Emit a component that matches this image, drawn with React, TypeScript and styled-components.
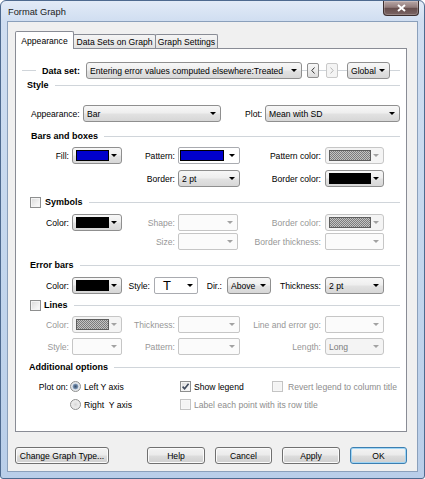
import React from "react";
import styled, { createGlobalStyle } from "styled-components";

const GlobalStyle = createGlobalStyle`
  html, body { margin: 0; padding: 0; }
  body {
    background: #ffffff;
    font-family: "Liberation Sans", Arial, sans-serif;
    font-size: 8.6px;
    color: #000;
  }
  * { box-sizing: border-box; }
`;

const CHECKER = "repeating-conic-gradient(#7c7c7c 0% 25%, #c4c4c4 0% 50%) 0 0 / 2px 2px";

/* ---------- window chrome ---------- */

const Window = styled.div`
  width: 425px;
  height: 479px;
  border: 1px solid #4e6a8f;
  border-radius: 6px 6px 3px 3px;
  background: linear-gradient(180deg, #e2ebf7 0px, #d0def1 20px, #c3d6ed 55%, #b9cee9 100%);
  padding: 0 6px 6px 6px;
  display: flex;
  flex-direction: column;
  overflow: hidden;
`;

const TitleBar = styled.div`
  height: 20px;
  display: flex;
  align-items: flex-start;
  justify-content: space-between;
  margin-right: -1px;
`;

const Title = styled.span`
  font-size: 9.3px;
  line-height: 22px;
  padding-left: 1px;
  color: #1b1b1b;
`;

const CloseButton = styled.div`
  width: 36px;
  height: 15px;
  border: 1px solid #3d2f2f;
  border-top: none;
  border-radius: 0 0 4px 4px;
  background: linear-gradient(180deg, #b9a8a7 0%, #917b7a 45%, #664e4d 52%, #7b6564 100%);
  box-shadow: inset 0 0 0 1px rgba(255, 255, 255, 0.22);
  display: flex;
  align-items: center;
  justify-content: center;
`;

const Client = styled.div`
  flex: 1;
  border: 1px solid #8ba0bb;
  background: #f0f0f0;
  padding: 9px 10px 7px 7px;
  display: flex;
  flex-direction: column;
`;

/* ---------- tabs ---------- */

const TabStrip = styled.div`
  height: 17px;
  display: flex;
  align-items: flex-end;
`;

const Tab = styled.div<{ $active?: boolean; $w: number }>`
  position: relative;
  z-index: ${(p) => (p.$active ? 2 : 1)};
  width: ${(p) => p.$w}px;
  height: ${(p) => (p.$active ? 18 : 14)}px;
  margin-bottom: ${(p) => (p.$active ? -1 : 0)}px;
  margin-left: ${(p) => (p.$active ? 0 : -1)}px;
  border: 1px solid #898c95;
  border-bottom: none;
  border-radius: 2px 2px 0 0;
  background: ${(p) => (p.$active ? "#ffffff" : "linear-gradient(180deg, #f5f5f5 0%, #ececec 50%, #e1e1e1 100%)")};
  display: flex;
  align-items: center;
  justify-content: center;
  padding-top: ${(p) => (p.$active ? 0 : 1)}px;
  white-space: nowrap;
`;

const Panel = styled.div`
  height: 384px;
  border: 1px solid #898c95;
  background: #ffffff;
  padding: 13px 6px 0 6px;
  display: flex;
  flex-direction: column;
`;

/* ---------- generic bits ---------- */

const Rule = styled.span<{ $w?: number }>`
  height: 1px;
  background: #d0d5da;
  ${(p) => (p.$w ? `width: ${p.$w}px; flex: none;` : "flex: 1;")}
`;

const Label = styled.span<{ $disabled?: boolean; $align?: "left" | "right"; $pr?: number }>`
  text-align: ${(p) => p.$align ?? "right"};
  padding-right: ${(p) => p.$pr ?? 3}px;
  white-space: nowrap;
  color: ${(p) => (p.$disabled ? "#979797" : "#000")};
`;

const FixedLabel = styled(Label)<{ $w: number; $ml?: number }>`
  width: ${(p) => p.$w}px;
  margin-left: ${(p) => p.$ml ?? 0}px;
  flex: none;
`;

const BoldLabel = styled.span<{ $w: number; $ml?: number }>`
  width: ${(p) => p.$w}px;
  margin-left: ${(p) => p.$ml ?? 0}px;
  flex: none;
  font-weight: bold;
  font-size: 9px;
  white-space: nowrap;
`;

const Header = styled.div<{ $mt: number; $indent: number }>`
  display: flex;
  align-items: center;
  height: 12px;
  margin-top: ${(p) => p.$mt}px;
  padding-left: ${(p) => p.$indent}px;
`;

const HeaderText = styled.span<{ $ml?: number }>`
  font-weight: bold;
  font-size: 9px;
  margin-left: ${(p) => p.$ml ?? 0}px;
  margin-right: 6px;
  white-space: nowrap;
`;

/* ---------- combo boxes ---------- */

type Kind = "button" | "field";

const ComboBox = styled.div<{ $w: number; $kind: Kind; $disabled?: boolean }>`
  width: ${(p) => p.$w}px;
  height: 17px;
  flex: none;
  border: 1px solid
    ${(p) =>
      p.$disabled
        ? "#c6c6c6"
        : p.$kind === "button"
        ? "#8f8f8f"
        : "#a9abb0"};
  border-radius: ${(p) => (p.$kind === "button" ? 3 : 2)}px;
  background: ${(p) =>
    p.$kind === "field"
      ? p.$disabled
        ? "#fbfbfb"
        : "#ffffff"
      : p.$disabled
      ? "#f4f4f4"
      : "linear-gradient(180deg, #f7f7f7 0%, #eeeeee 48%, #e2e2e2 52%, #d7d7d7 100%)"};
  color: ${(p) => (p.$disabled ? "#7d7d7d" : "#000")};
  display: flex;
  align-items: center;
  padding: 0 4px 0 ${(p) => (p.$kind === "field" ? 1 : 3)}px;
  gap: 2px;
  overflow: hidden;
`;

const ComboValue = styled.span`
  flex: 1;
  display: flex;
  align-items: center;
  white-space: nowrap;
  overflow: hidden;
`;

const Arrow = styled.span<{ $disabled?: boolean }>`
  flex: none;
  width: 0;
  height: 0;
  border-left: 3px solid transparent;
  border-right: 3px solid transparent;
  border-top: 3px solid ${(p) => (p.$disabled ? "#a2a2a2" : "#000")};
`;

const Swatch = styled.span<{ $fill: string; $w: number; $disabled?: boolean }>`
  width: ${(p) => p.$w}px;
  height: 11px;
  flex: none;
  border: 1px solid ${(p) => (p.$disabled ? "#5e5e5e" : "#000")};
  background: ${(p) => p.$fill};
`;

const TGlyph = styled.span`
  font-size: 13px;
  line-height: 13px;
  padding-left: 7px;
`;

const NavButton = styled.div<{ $disabled?: boolean }>`
  width: 12px;
  height: 15px;
  flex: none;
  border: 1px solid ${(p) => (p.$disabled ? "#c9c9c9" : "#8f8f8f")};
  border-radius: 2px;
  background: ${(p) =>
    p.$disabled ? "#f4f4f4" : "linear-gradient(180deg, #f7f7f7 0%, #ececec 50%, #dcdcdc 100%)"};
  display: flex;
  align-items: center;
  justify-content: center;
`;

function Dropdown({
  w,
  kind = "button",
  disabled,
  children,
}: {
  w: number;
  kind?: Kind;
  disabled?: boolean;
  children?: React.ReactNode;
}) {
  return (
    <ComboBox $w={w} $kind={kind} $disabled={disabled}>
      <ComboValue>{children}</ComboValue>
      <Arrow $disabled={disabled} />
    </ComboBox>
  );
}

/* ---------- checkbox / radio ---------- */

const Box = styled.span<{ $disabled?: boolean }>`
  width: 11px;
  height: 11px;
  flex: none;
  border: 1px solid ${(p) => (p.$disabled ? "#c4c4c4" : "#8e8f8f")};
  background: ${(p) =>
    p.$disabled ? "#f4f4f4" : "linear-gradient(135deg, #d9d9d9 0%, #f0f0f0 60%, #fdfdfd 100%)"};
  box-shadow: inset 0 0 0 1px ${(p) => (p.$disabled ? "#f7f7f7" : "#f4f4f4")};
  display: inline-flex;
  align-items: center;
  justify-content: center;
`;

function CheckBox({ checked, disabled }: { checked?: boolean; disabled?: boolean }) {
  return (
    <Box $disabled={disabled}>
      {checked && (
        <svg width="9" height="9" viewBox="0 0 9 9">
          <path d="M1.6 4.6 L3.6 6.8 L7.6 1.8" fill="none" stroke="#3f4a5c" strokeWidth="1.6" />
        </svg>
      )}
    </Box>
  );
}

const Radio = styled.span<{ $checked?: boolean }>`
  width: 11px;
  height: 11px;
  flex: none;
  border-radius: 50%;
  border: 1px solid #8e8f8f;
  background: ${(p) =>
    p.$checked
      ? "radial-gradient(circle, #3e4f66 0, #5c7796 1.6px, #8aa4c2 2.6px, #dfe3e8 3.2px, #f1f1f1 100%)"
      : "radial-gradient(circle, #d6d6d6 0, #e6e6e6 2px, #f4f4f4 100%)"};
`;

const Choice = styled.span<{ $gap: number; $disabled?: boolean }>`
  display: flex;
  align-items: center;
  gap: ${(p) => p.$gap}px;
  white-space: nowrap;
  color: ${(p) => (p.$disabled ? "#8d8d8d" : "#000")};
`;

/* ---------- rows ---------- */

const DataSetRow = styled.div`
  display: flex;
  align-items: center;
  height: 17px;
`;

const FlexRow = styled.div<{ $mt: number; $pl?: number }>`
  display: flex;
  align-items: center;
  height: 17px;
  margin-top: ${(p) => p.$mt}px;
  padding-left: ${(p) => p.$pl ?? 0}px;
`;

const TripleRow = styled.div<{ $mt: number }>`
  display: grid;
  grid-template-columns: 50px 50px 56px 62px 85px 59px;
  align-items: center;
  height: 17px;
  margin-top: ${(p) => p.$mt}px;
`;

const ErrorRow = styled.div<{ $mt: number }>`
  display: grid;
  grid-template-columns: 50px 50px 32px 44px 29px 44px 54px 59px;
  align-items: center;
  height: 17px;
  margin-top: ${(p) => p.$mt}px;
`;

const OptionsRow = styled.div<{ $mt: number }>`
  display: grid;
  grid-template-columns: 48px 110px 92px 1fr;
  align-items: center;
  height: 17px;
  margin-top: ${(p) => p.$mt}px;
`;

const Span2 = styled.div`
  grid-column: span 2;
`;

/* ---------- buttons ---------- */

const ButtonRow = styled.div`
  display: flex;
  align-items: center;
  margin-top: 15px;
  gap: 10px;
`;

const Spacer = styled.div`
  flex: 1;
`;

const Button = styled.div<{ $w: number; $default?: boolean }>`
  width: ${(p) => p.$w}px;
  height: 17px;
  border: 1px solid ${(p) => (p.$default ? "#3c7fb1" : "#707070")};
  border-radius: 3px;
  background: linear-gradient(180deg, #f3f3f3 0%, #ebebeb 48%, #dddddd 52%, #cfcfcf 100%);
  box-shadow: inset 0 0 0 1px ${(p) => (p.$default ? "#9fd5f5" : "#fbfbfb")};
  display: flex;
  align-items: center;
  justify-content: center;
  white-space: nowrap;
`;

/* ---------- app ---------- */

export default function App() {
  return (
    <>
      <GlobalStyle />
      <Window>
        <TitleBar>
          <Title>Format Graph</Title>
          <CloseButton>
            <svg width="9" height="8" viewBox="0 0 9 8">
              <path d="M1 1 L8 7 M8 1 L1 7" stroke="#ffffff" strokeWidth="2" />
            </svg>
          </CloseButton>
        </TitleBar>
        <Client>
          <TabStrip>
            <Tab $active $w={59}>Appearance</Tab>
            <Tab $w={83}>Data Sets on Graph</Tab>
            <Tab $w={63}>Graph Settings</Tab>
          </TabStrip>
          <Panel>
            <DataSetRow>
              <Rule $w={14} />
              <BoldLabel $w={44} $ml={6}>Data set:</BoldLabel>
              <Dropdown w={216}>Entering error values computed elsewhere:Treated</Dropdown>
              <Rule $w={5} />
              <NavButton>
                <svg width="4" height="7" viewBox="0 0 4 7">
                  <path d="M3.5 0.5 L0.8 3.5 L3.5 6.5" fill="none" stroke="#333" strokeWidth="1" />
                </svg>
              </NavButton>
              <Rule $w={7} />
              <NavButton $disabled>
                <svg width="4" height="7" viewBox="0 0 4 7">
                  <path d="M0.5 0.5 L3.2 3.5 L0.5 6.5" fill="none" stroke="#b5b5b5" strokeWidth="1" />
                </svg>
              </NavButton>
              <Rule $w={9} />
              <Dropdown w={43}>Global</Dropdown>
              <Rule />
            </DataSetRow>

            <Header $mt={0} $indent={5}>
              <HeaderText>Style</HeaderText>
              <Rule />
            </Header>
            <FlexRow $mt={14} $pl={9}>
              <FixedLabel $w={52} $align="left" $pr={0}>Appearance:</FixedLabel>
              <Dropdown w={138}>Bar</Dropdown>
              <FixedLabel $w={20} $ml={24} $align="left" $pr={0}>Plot:</FixedLabel>
              <Dropdown w={135}>Mean with SD</Dropdown>
            </FlexRow>

            <Header $mt={8} $indent={9}>
              <HeaderText>Bars and boxes</HeaderText>
              <Rule />
            </Header>
            <TripleRow $mt={5}>
              <Label>Fill:</Label>
              <Dropdown w={50}>
                <Swatch $w={33} $fill="#0000cc" />
              </Dropdown>
              <Label>Pattern:</Label>
              <Dropdown w={62} kind="field">
                <Swatch $w={44} $fill="#0000cc" />
              </Dropdown>
              <Label $pr={4}>Pattern color:</Label>
              <Dropdown w={59} disabled>
                <Swatch $w={42} $fill={CHECKER} $disabled />
              </Dropdown>
            </TripleRow>
            <TripleRow $mt={6}>
              <span />
              <span />
              <Label>Border:</Label>
              <Dropdown w={62}>2 pt</Dropdown>
              <Label $pr={4}>Border color:</Label>
              <Dropdown w={59}>
                <Swatch $w={42} $fill="#000000" />
              </Dropdown>
            </TripleRow>

            <Header $mt={9} $indent={8}>
              <CheckBox />
              <HeaderText $ml={4}>Symbols</HeaderText>
              <Rule />
            </Header>
            <TripleRow $mt={6}>
              <Label>Color:</Label>
              <Dropdown w={50}>
                <Swatch $w={33} $fill="#000000" />
              </Dropdown>
              <Label $disabled>Shape:</Label>
              <Dropdown w={60} kind="field" disabled />
              <Label $disabled $pr={4}>Border color:</Label>
              <Dropdown w={59} disabled>
                <Swatch $w={42} $fill={CHECKER} $disabled />
              </Dropdown>
            </TripleRow>
            <TripleRow $mt={2}>
              <span />
              <span />
              <Label $disabled>Size:</Label>
              <Dropdown w={60} kind="field" disabled />
              <Label $disabled $pr={4}>Border thickness:</Label>
              <Dropdown w={59} kind="field" disabled />
            </TripleRow>

            <Header $mt={9} $indent={8}>
              <HeaderText>Error bars</HeaderText>
              <Rule />
            </Header>
            <ErrorRow $mt={6}>
              <Label>Color:</Label>
              <Dropdown w={50}>
                <Swatch $w={33} $fill="#000000" />
              </Dropdown>
              <Label $pr={4}>Style:</Label>
              <Dropdown w={44} kind="field">
                <TGlyph>T</TGlyph>
              </Dropdown>
              <Label $pr={5}>Dir.:</Label>
              <Dropdown w={44}>Above</Dropdown>
              <Label $pr={4}>Thickness:</Label>
              <Dropdown w={59}>2 pt</Dropdown>
            </ErrorRow>

            <Header $mt={5} $indent={8}>
              <CheckBox />
              <HeaderText $ml={3}>Lines</HeaderText>
              <Rule />
            </Header>
            <TripleRow $mt={5}>
              <Label $disabled>Color:</Label>
              <Dropdown w={50} disabled>
                <Swatch $w={33} $fill={CHECKER} $disabled />
              </Dropdown>
              <Label $disabled>Thickness:</Label>
              <Dropdown w={62} kind="field" disabled />
              <Label $disabled $pr={4}>Line and error go:</Label>
              <Dropdown w={59} kind="field" disabled />
            </TripleRow>
            <TripleRow $mt={5}>
              <Label $disabled>Style:</Label>
              <Dropdown w={50} kind="field" disabled />
              <Label $disabled>Pattern:</Label>
              <Dropdown w={62} kind="field" disabled />
              <Label $disabled $pr={4}>Length:</Label>
              <Dropdown w={59} disabled>Long</Dropdown>
            </TripleRow>

            <Header $mt={6} $indent={7}>
              <HeaderText>Additional options</HeaderText>
              <Rule />
            </Header>
            <OptionsRow $mt={5}>
              <Label $pr={2}>Plot on:</Label>
              <Choice $gap={3}>
                <Radio $checked />
                Left Y axis
              </Choice>
              <Choice $gap={3}>
                <CheckBox checked />
                Show legend
              </Choice>
              <Choice $gap={5} $disabled>
                <CheckBox disabled />
                Revert legend to column title
              </Choice>
            </OptionsRow>
            <OptionsRow $mt={1}>
              <span />
              <Choice $gap={3}>
                <Radio />
                Right{"\u00a0"} Y axis
              </Choice>
              <Span2>
                <Choice $gap={3} $disabled>
                  <CheckBox disabled />
                  Label each point with its row title
                </Choice>
              </Span2>
            </OptionsRow>
          </Panel>
          <ButtonRow>
            <Button $w={94}>Change Graph Type...</Button>
            <Spacer />
            <Button $w={58}>Help</Button>
            <Button $w={57}>Cancel</Button>
            <Button $w={58}>Apply</Button>
            <Button $w={57} $default>OK</Button>
          </ButtonRow>
        </Client>
      </Window>
    </>
  );
}
